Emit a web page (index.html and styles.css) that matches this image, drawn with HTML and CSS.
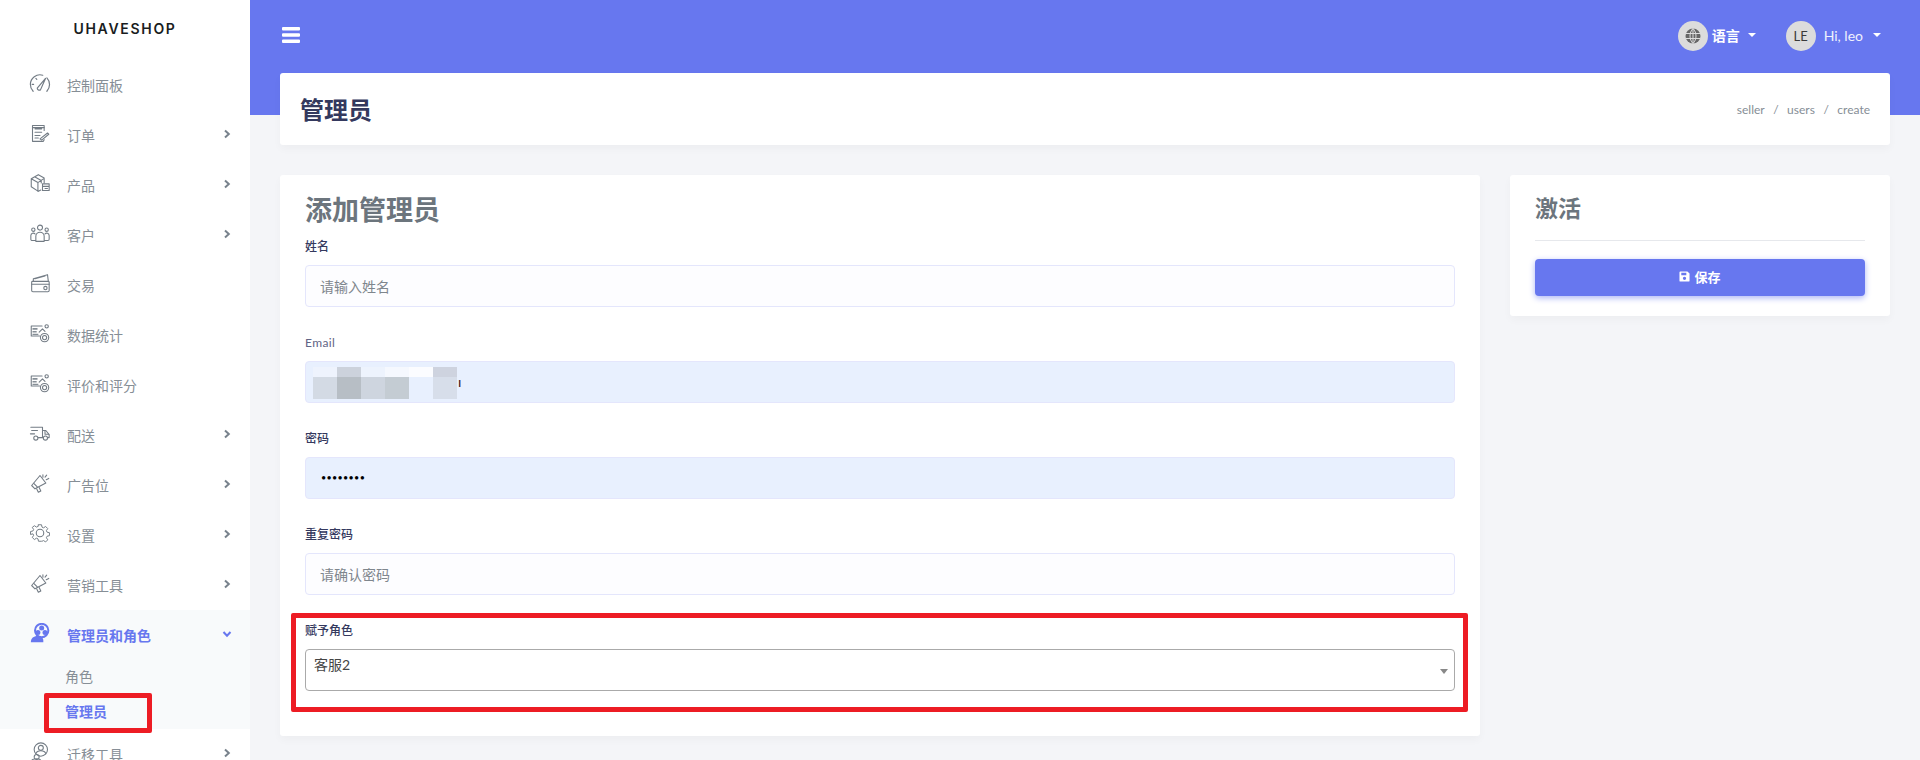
FILE: index.html
```html
<!DOCTYPE html>
<html lang="zh-CN">

<head>
    <meta charset="UTF-8">
    <title>管理员</title>
    <link rel="stylesheet" href="styles.css">
</head>

<body>
    <svg class="sprite" width="0" height="0">
        <symbol id="i-gauge" viewBox="0 0 24 20">
            <path d="M4.500 19a10.500 10.500 0 0 1-3-7.500A10.500 10.500 0 0 1 15 1.500" />
            <path d="M19.500 4.500a10.500 10.500 0 0 1 0 14.500" />
            <path d="M3.500 11.500h1.500M7.500 5l1 1" />
            <path d="M9 15.500 18 5l-5.500 12.500a2.300 2.300 0 0 1-3.500-2z" />
        </symbol>
        <symbol id="i-orders" viewBox="0 0 24 24">
            <path d="M17 9V3H3v19h13l1-2" />
            <path d="M6 7h8M6 11h8M6 15h6M6 18h4M3 5.500h14" />
            <path d="M12 19l9-7 1.500 1.500-8.500 7z" />
        </symbol>
        <symbol id="i-box" viewBox="0 0 24 24">
            <path d="M1.500 7 10 2l7 4v6M1.500 7v9.500L10 22l3-1.500M1.500 7 9.500 11.500V22M9.500 11.500 17 6.500M5.500 4.500l8 4.500v3" />
            <path d="M15 13h8v8h-8zM15 16h8M18 18.500h3" />
        </symbol>
        <symbol id="i-users" viewBox="0 0 24 24">
            <circle cx="12" cy="5.500" r="3" />
            <circle cx="4" cy="8" r="2" />
            <circle cx="20" cy="8" r="2" />
            <path d="M7 22v-6a5 5 0 0 1 10 0v6zM7 21H2.500A1.500 1.500 0 0 1 1 19.500V15a3 3 0 0 1 5-2M17 21h4.500a1.500 1.500 0 0 0 1.500-1.500V15a3 3 0 0 0-5-2" />
        </symbol>
        <symbol id="i-card" viewBox="0 0 24 24">
            <path d="M2 11V21a1.500 1.500 0 0 0 1.500 1.500h18A1.500 1.500 0 0 0 23 21V11a1 1 0 0 0-1-1H3a1 1 0 0 0-1 1z" />
            <path d="M4 10 4 7l17-5 1 8M2 13.500h21M6 7l12-3.500" />
            <circle cx="18.500" cy="18" r="2" />
        </symbol>
        <symbol id="i-stats" viewBox="0 0 24 24">
            <path d="M1.500 3.500h13M1.500 3.500v12h10" />
            <path class="solid" d="M3 6h6v2H3zM3 9.500h5v2H3zM3 13h7v1.500H3z" />
            <path d="M11 11l4-4 3 3" />
            <circle cx="20" cy="4" r="2" />
            <circle cx="17.500" cy="17.500" r="5" />
            <circle cx="17.500" cy="17.500" r="2.500" />
        </symbol>
        <symbol id="i-truck" viewBox="0 0 24 24">
            <path d="M1 5h14v12.500H10M15 9h4l4 5v3.500h-2M15 17.500h1" />
            <path d="M2 9h7M0.500 13h5M18 9.500v4h4.500" />
            <circle cx="7" cy="18" r="2.500" />
            <circle cx="18.500" cy="18" r="2.500" />
        </symbol>
        <symbol id="i-horn" viewBox="0 0 24 24">
            <path d="M12 3 2 15l4 4 13-7z" />
            <path d="M8 19l2 4 3-1.500-2-4M4.500 12.500l4.500 4.500" />
            <path d="M15.500 2v3M20 2.500 18 5M22.500 6.500 19.500 8" />
        </symbol>
        <symbol id="i-gear" viewBox="0 0 24 24">
            <path d="M10 1h4l.7 3.200 2 .9 2.800-1.800 2.800 2.800-1.800 2.800.9 2 3.200.7v4l-3.200.7-.9 2 1.800 2.800-2.800 2.800-2.800-1.800-2 .9L14 23h-4l-.7-3.200-2-.9-2.800 1.800-2.800-2.800 1.800-2.800-.9-2L-.6 14v-4l3.200-.7.900-2L1.700 4.500 4.500 2.300l2.800 1.800 2-.9z" transform="translate(1.200 1.200) scale(.9)" />
            <circle cx="12" cy="12" r="4.500" />
        </symbol>
        <symbol id="i-admin" viewBox="0 0 24 24">
            <circle class="heavy" cx="14" cy="9" r="8" />
            <circle class="solid" cx="14" cy="6" r="3" />
            <circle class="solid" cx="9.500" cy="11.500" r="3" />
            <circle class="solid" cx="18" cy="11.500" r="3" />
            <path class="solid" d="M1 23c0-5 3.500-7.500 8-7.500s7 2.500 7 5.500v2z" />
        </symbol>
        <symbol id="i-migrate" viewBox="0 0 24 24">
            <circle cx="13" cy="9" r="8" />
            <circle cx="13" cy="7" r="3" />
            <path d="M7 14c1-3 3-3.500 6-3.500s5 .5 6 3.500" />
            <circle cx="8" cy="18" r="3" />
            <path d="M2 23c0-2 2.500-3 6-3s5 1 5 3" />
        </symbol>
        <symbol id="i-chev-right" viewBox="0 0 10 10">
            <path class="chev" d="M3 1.500 6.800 5 3 8.500" />
        </symbol>
        <symbol id="i-chev-down" viewBox="0 0 10 10">
            <path class="chev" d="M1.500 3 5 6.800 8.500 3" />
        </symbol>
    </svg>

    <aside class="sidebar">
        <div class="brand">UHAVESHOP</div>
        <ul class="menu">
            <li class="menu-item"><svg class="menu-icon"><use href="#i-gauge" /></svg><span>控制面板</span></li>
            <li class="menu-item"><svg class="menu-icon"><use href="#i-orders" /></svg><span>订单</span><svg class="chevron"><use href="#i-chev-right" /></svg></li>
            <li class="menu-item"><svg class="menu-icon"><use href="#i-box" /></svg><span>产品</span><svg class="chevron"><use href="#i-chev-right" /></svg></li>
            <li class="menu-item"><svg class="menu-icon"><use href="#i-users" /></svg><span>客户</span><svg class="chevron"><use href="#i-chev-right" /></svg></li>
            <li class="menu-item"><svg class="menu-icon"><use href="#i-card" /></svg><span>交易</span></li>
            <li class="menu-item"><svg class="menu-icon"><use href="#i-stats" /></svg><span>数据统计</span></li>
            <li class="menu-item"><svg class="menu-icon"><use href="#i-stats" /></svg><span>评价和评分</span></li>
            <li class="menu-item"><svg class="menu-icon"><use href="#i-truck" /></svg><span>配送</span><svg class="chevron"><use href="#i-chev-right" /></svg></li>
            <li class="menu-item"><svg class="menu-icon"><use href="#i-horn" /></svg><span>广告位</span><svg class="chevron"><use href="#i-chev-right" /></svg></li>
            <li class="menu-item"><svg class="menu-icon"><use href="#i-gear" /></svg><span>设置</span><svg class="chevron"><use href="#i-chev-right" /></svg></li>
            <li class="menu-item"><svg class="menu-icon"><use href="#i-horn" /></svg><span>营销工具</span><svg class="chevron"><use href="#i-chev-right" /></svg></li>
            <li class="menu-group">
                <div class="menu-item active"><svg class="menu-icon"><use href="#i-admin" /></svg><span>管理员和角色</span><svg class="chevron"><use href="#i-chev-down" /></svg></div>
                <a class="sub-item">角色</a>
                <a class="sub-item current">管理员</a>
            </li>
            <li class="menu-item"><svg class="menu-icon"><use href="#i-migrate" /></svg><span>迁移工具</span><svg class="chevron"><use href="#i-chev-right" /></svg></li>
        </ul>
    </aside>

    <div class="main">
        <header class="topbar">
            <svg class="burger" viewBox="0 0 18 16">
                <path d="M1 0h16a1 1 0 0 1 1 1v1.500a1 1 0 0 1-1 1H1a1 1 0 0 1-1-1V1a1 1 0 0 1 1-1zM1 6.200h16a1 1 0 0 1 1 1v1.500a1 1 0 0 1-1 1H1a1 1 0 0 1-1-1V7.200a1 1 0 0 1 1-1zM1 12.500h16a1 1 0 0 1 1 1V15a1 1 0 0 1-1 1H1a1 1 0 0 1-1-1v-1.500a1 1 0 0 1 1-1z" />
            </svg>
            <div class="nav-right">
                <div class="nav-link lang">
                    <span class="avatar">
                        <svg class="globe" viewBox="0 0 16 16">
                            <circle cx="8" cy="8" r="7.500" />
                            <path class="globe-lines" d="M8 .5c-4 4-4 11 0 15M8 .5c4 4 4 11 0 15M8 .5v15M1 5.500h14M1 10.500h14" />
                        </svg>
                    </span>
                    <span class="lang-text">语言</span><i class="caret"></i>
                </div>
                <div class="nav-link user">
                    <span class="avatar">LE</span>
                    <span class="user-text">Hi, leo</span><i class="caret"></i>
                </div>
            </div>
        </header>

        <div class="content">
            <section class="page-header">
                <h1>管理员</h1>
                <div class="breadcrumb"><span>seller</span><span>/</span><span>users</span><span>/</span><span>create</span></div>
            </section>

            <div class="columns">
                <section class="card form-card">
                    <h2>添加管理员</h2>
                    <div class="form-group">
                        <label>姓名</label>
                        <input class="form-control" type="text" placeholder="请输入姓名">
                    </div>
                    <div class="form-group">
                        <label class="plain">Email</label>
                        <div class="form-control autofill email-field">
                            <div class="mosaic">
                                <i class="m1"></i><i class="m2"></i><i class="m3"></i><i class="m4"></i><i class="m5"></i><i class="m6"></i>
                                <i class="m7"></i><i class="m8"></i><i class="m9"></i><i class="m10"></i><i class="m11"></i><i class="m12"></i>
                            </div>
                            <span class="email-end">ı</span>
                        </div>
                    </div>
                    <div class="form-group">
                        <label>密码</label>
                        <div class="form-control autofill dots">••••••••</div>
                    </div>
                    <div class="form-group">
                        <label>重复密码</label>
                        <input class="form-control" type="text" placeholder="请确认密码">
                    </div>
                    <div class="form-group role-group">
                        <label>赋予角色</label>
                        <div class="select-box">客服2<i class="select-arrow"></i></div>
                    </div>
                </section>

                <section class="card side-card">
                    <h3>激活</h3>
                    <button class="btn-save">
                        <svg class="save-icon" viewBox="0 0 12 12">
                            <path d="M1.500 0.500h7.700L11.500 2.800v7.700a1 1 0 0 1-1 1h-9a1 1 0 0 1-1-1v-9a1 1 0 0 1 1-1zM2.500 2v2.500h5.500V2zM6 6.200a1.800 1.800 0 1 0 0 3.600 1.800 1.800 0 0 0 0-3.600z" fill-rule="evenodd" />
                        </svg>
                        保存
                    </button>
                </section>
            </div>
        </div>
    </div>
</body>

</html>
```

FILE: styles.css
```css
*,
*::before,
*::after {
    box-sizing: border-box;
}

html,
body {
    height: 100%;
}

body {
    display: flex;
    margin: 0;
    overflow: hidden;
    font-family: Lato, "Noto Sans CJK SC", sans-serif;
    font-size: 14px;
    background: #f4f5f8;
    color: #6c757d;
}

.sprite {
    position: absolute;
}

/* sidebar */
.sidebar {
    flex: 0 0 250px;
    height: 100%;
    overflow: hidden;
    background: #fff;
}

.brand {
    height: 60px;
    padding-top: 20px;
    text-align: center;
    font-family: Inter, sans-serif;
    font-size: 14px;
    font-weight: 600;
    line-height: 18px;
    letter-spacing: 1.700px;
    color: #191d21;
}

.menu {
    margin: 0;
    padding: 0;
    list-style: none;
}

.menu-item {
    display: flex;
    align-items: center;
    height: 50px;
    padding-left: 29px;
    color: #868e96;
}

.menu-item span {
    margin-left: 16px;
}

.menu-icon {
    flex: 0 0 22px;
    width: 22px;
    height: 20px;
    margin-top: -5px;
    fill: none;
    stroke: #737c85;
    stroke-width: 1.300;
    stroke-linecap: round;
    stroke-linejoin: round;
}

.solid {
    fill: currentColor;
    stroke: none;
}

.chevron {
    width: 10px;
    height: 10px;
    margin-left: auto;
    margin-right: 18px;
    margin-top: -3px;
    color: #78828c;
}

.chev {
    fill: none;
    stroke: currentColor;
    stroke-width: 2;
}

.menu-group {
    height: 119px;
    background: #f8fafb;
}

.menu-item.active {
    font-weight: 600;
    color: #6777ef;
}

.menu-item.active .menu-icon,
.menu-item.active .chevron {
    color: #6777ef;
    stroke: #6777ef;
}

.menu-item.active .chevron {
    stroke: none;
}

.heavy {
    stroke-width: 2.400;
}

.sub-item {
    display: block;
    position: relative;
    height: 34.500px;
    padding-left: 65px;
    line-height: 34px;
    color: #868e96;
}

.sub-item.current {
    font-weight: 600;
    color: #6777ef;
}

/* annotation in the screenshot */
.sub-item.current::after {
    content: "";
    position: absolute;
    left: 44px;
    top: -2px;
    width: 108px;
    height: 40px;
    border: 5px solid #ed1c24;
    border-radius: 2px;
}

/* main */
.main {
    flex: 1;
    min-width: 0;
}

.topbar {
    display: flex;
    align-items: flex-start;
    justify-content: space-between;
    height: 115px;
    padding: 21px 39px 0 32px;
    background: #6777ef;
    color: #fff;
}

.burger {
    width: 18px;
    height: 16px;
    margin-top: 6px;
    fill: #fff;
}

.nav-right {
    display: flex;
    gap: 30px;
}

.nav-link {
    display: flex;
    align-items: center;
    height: 30px;
}

.avatar {
    display: flex;
    align-items: center;
    justify-content: center;
    width: 30px;
    height: 30px;
    border-radius: 50%;
    background: #dcdcdc;
    color: #3a3a3a;
    font-size: 13px;
}

.globe {
    width: 16px;
    height: 16px;
    fill: #666;
}

.globe-lines {
    fill: none;
    stroke: #dcdcdc;
    stroke-width: 1;
}

.lang-text {
    margin-top: -3px;
    margin-left: 4px;
    font-weight: 700;
}

.lang .caret {
    margin-left: 8px;
}

.user-text {
    margin-top: -2px;
    margin-left: 8px;
    color: #f0f1fd;
}

.caret {
    width: 0;
    height: 0;
    margin-left: 10px;
    margin-top: -2px;
    border-left: 4px solid transparent;
    border-right: 4px solid transparent;
    border-top: 4.500px solid #fff;
}

.content {
    margin-top: -42px;
    padding: 0 30px;
}

.page-header {
    display: flex;
    align-items: center;
    justify-content: space-between;
    height: 72px;
    padding: 0 20px;
    border-radius: 3px;
    background: #fff;
    box-shadow: 0 4px 8px rgba(0, 0, 0, 0.03);
}

h1 {
    margin: 0 0 2px;
    font-size: 24px;
    font-weight: 700;
    color: #34395e;
}

.breadcrumb {
    display: flex;
    gap: 8.500px;
    font-size: 12px;
    color: #868e96;
}

.columns {
    display: grid;
    grid-template-columns: 1200px 380px;
    gap: 30px;
    align-items: start;
    margin-top: 30px;
}

.card {
    border-radius: 3px;
    background: #fff;
    box-shadow: 0 4px 8px rgba(0, 0, 0, 0.03);
}

.form-card {
    height: 561px;
    padding: 15px 25px 0;
}

h2 {
    margin: 0 0 7px;
    font-size: 27px;
    line-height: 40px;
    font-weight: 700;
    color: #6c757d;
}

.form-group {
    position: relative;
    height: 96px;
    padding-top: 2px;
}

label {
    display: block;
    height: 26px;
    font-size: 12px;
    line-height: 16px;
    font-weight: 500;
    color: #34395e;
}

label.plain {
    font-weight: 400;
    letter-spacing: 0.400px;
    color: #5f6485;
}

.form-control {
    display: block;
    width: 100%;
    height: 42px;
    padding: 0 15px 0 14px;
    border: 1px solid #e4e6fc;
    border-radius: 4px;
    background: #fdfdff;
    font-family: inherit;
    font-size: 14px;
    line-height: 40px;
    color: #495057;
}

.form-control::placeholder {
    color: #7f868d;
}

.autofill {
    background: #e8f0fe;
    color: #000;
}

.email-field {
    position: relative;
}

.mosaic {
    position: absolute;
    left: 7px;
    top: 5px;
    display: grid;
    grid-template-columns: repeat(6, 24px);
    grid-template-rows: 10px 22px;
}

.m1 { background: #eef3fd; }
.m2 { background: #ccd2dc; }
.m3 { background: #edf3fd; }
.m4 { background: #f5f8fe; }
.m5 { background: #fbfcff; }
.m6 { background: #ced3df; }
.m7 { background: #d3dae4; }
.m8 { background: #b7bec5; }
.m9 { background: #ced5df; }
.m10 { background: #c4ccd3; }
.m11 { background: #e8f0fe; }
.m12 { background: #d7deea; }

.email-end {
    position: absolute;
    left: 152px;
    top: 0;
    color: #3a1010;
}

.dots {
    padding-left: 15px;
    font-size: 9px;
    letter-spacing: 0.300px;
}

/* annotation in the screenshot */
.role-group::before {
    content: "";
    position: absolute;
    left: -14px;
    right: -13px;
    top: -8px;
    height: 99px;
    border: 5px solid #ed1c24;
    border-radius: 2px;
}

.select-box {
    position: relative;
    height: 42px;
    padding-left: 8px;
    border: 1px solid #aaa;
    border-radius: 4px;
    line-height: 29px;
    color: #444;
}

.select-arrow {
    position: absolute;
    right: 6px;
    top: 19px;
    border-left: 4px solid transparent;
    border-right: 4px solid transparent;
    border-top: 5px solid #888;
}

.side-card {
    height: 141px;
    padding: 15px 25px 0;
}

h3 {
    margin: 0;
    height: 51px;
    border-bottom: 1px solid #e6e8ec;
    font-size: 23px;
    line-height: 36px;
    font-weight: 700;
    color: #6c757d;
}

.btn-save {
    display: flex;
    align-items: center;
    justify-content: center;
    gap: 4px;
    width: 330px;
    height: 37px;
    margin-top: 18px;
    padding-bottom: 4px;
    border: none;
    border-radius: 4px;
    background: #6777ef;
    box-shadow: 0 2px 6px #acb5f6;
    font-family: inherit;
    font-size: 13px;
    font-weight: 700;
    color: #fff;
}

.save-icon {
    width: 11px;
    height: 11px;
    fill: #fff;
}
```
